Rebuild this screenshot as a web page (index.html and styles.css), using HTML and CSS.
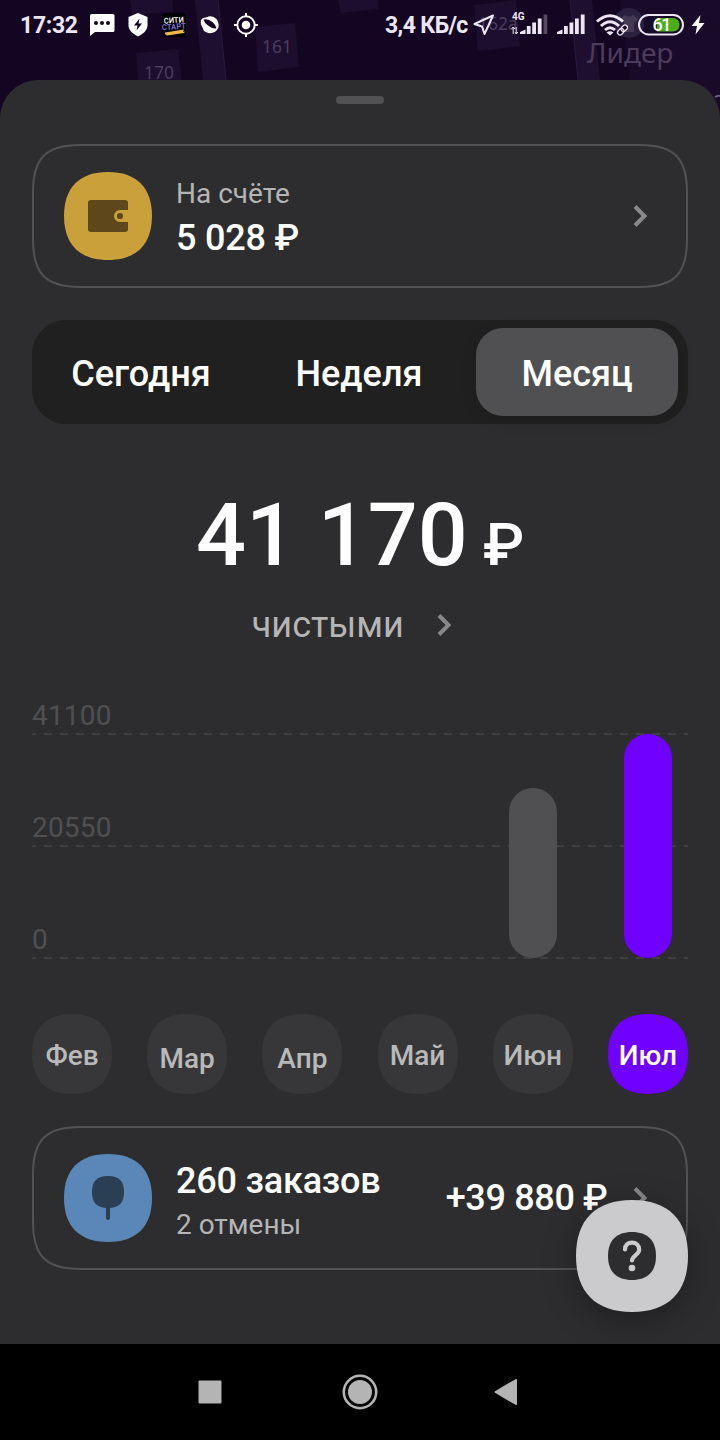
FILE: index.html
```html
<!DOCTYPE html>
<html lang="ru">
<head>
    <meta charset="UTF-8">
    <meta name="viewport" content="width=device-width, initial-scale=1.0">
    <title>Доход</title>
    <link rel="stylesheet" href="styles.css">
</head>
<body>
    <!-- Shared shapes -->
    <svg class="defs" width="0" height="0">
        <symbol id="squircle" viewBox="0 0 88 88">
            <path d="M0 44C0 15.500 15.500 0 44 0S88 15.500 88 44 72.500 88 44 88 0 72.500 0 44Z" fill="currentColor"/>
        </symbol>
        <symbol id="chevron" viewBox="0 0 16 24">
            <path d="M3 2.500L12.500 12L3 21.500" fill="none" stroke="currentColor" stroke-width="4"/>
        </symbol>
        <symbol id="card-outline" viewBox="0 0 656 144">
            <path d="M1 48C1 14 14 1 48 1H608C642 1 655 14 655 48V96C655 130 642 143 608 143H48C14 143 1 130 1 96Z" fill="none" stroke="currentColor" stroke-width="2"/>
        </symbol>
    </svg>

    <div class="phone">
        <svg class="map" width="720" height="130" viewBox="0 0 720 130">
            <rect width="720" height="130" fill="#140623"/>
            <g fill="#1d0d2f">
                <path d="M130 0H173V12L132 15Z"/>
                <path d="M136 53L178 49L183 90H139Z"/>
                <path d="M255 27L295 23L299 67L258 72Z"/>
                <path d="M195 0H218L227 90H204Z" fill="#1e0f31"/>
                <path d="M338 0H378V9L341 13Z"/>
                <path d="M474 5L516 0L520 46L478 51Z"/>
                <path d="M570 0H592L601 90H579Z" fill="#1e0f31"/>
                <path d="M620 0H720V130H690L680 80H630Z" fill="#190a2a"/>
            </g>
            <g fill="none" stroke="#2a1940" stroke-width="1">
                <path d="M218 0L227 90M570 0L579 90"/>
            </g>
            <circle cx="629" cy="23" r="15" fill="#29213f"/>
            <path d="M620 19L625 15Q629 18 633 15L638 19L635 23L634 22V32H624V22L622 23Z" fill="#443a54"/>
            <path d="M715 97Q718 95 720 96" fill="none" stroke="#6d607c" stroke-width="2"/>
            <g class="map-labels">
                <text x="262" y="53">161</text>
                <text x="144" y="79">170</text>
                <text x="478" y="30">162а</text>
                <text class="map-place" x="587" y="63">Лидер</text>
            </g>
        </svg>

        <header class="status-bar">
            <div class="status-left">
                <span class="clock">17:32</span>
                <svg class="ic-chat" width="25" height="23" viewBox="0 0 25 23">
                    <path d="M2 1H23Q24.500 1 24.500 2.500V17.500Q24.500 19 23 19H5L0 23V3Q0 1 2 1Z" fill="#fff"/>
                    <g fill="#140623"><circle cx="6" cy="10" r="2"/><circle cx="12" cy="10" r="2"/><circle cx="18" cy="10" r="2"/></g>
                </svg>
                <svg class="ic-shield" width="20" height="24" viewBox="0 0 20 24">
                    <path d="M10 0L19.500 4V13Q19 19 10 23.500Q1 19 .5 13V4Z" fill="#fff"/>
                    <path d="M11.500 5.500L6 12.500H9.500L8.500 17.500L14 10.500H10.500Z" fill="#140623"/>
                </svg>
                <svg class="ic-app" width="24" height="24" viewBox="0 0 24 24">
                    <rect width="24" height="24" rx="4" fill="#000"/>
                    <text x="2" y="10" fill="#fff" textLength="20" lengthAdjust="spacingAndGlyphs" transform="rotate(-4 12 10)">СИТИ</text>
                    <text x="0" y="16.500" fill="#8d7be0" textLength="24" lengthAdjust="spacingAndGlyphs" transform="rotate(-4 12 16)">СТАРТ</text>
                    <path d="M3 19.500L22 16.500L21 19L23 18.500L22 20L5 22.500L3 21Z" fill="#f0b64a"/>
                </svg>
                <svg class="ic-ball" width="20" height="20" viewBox="0 0 20 20">
                    <path d="M6 2.500Q12 -.5 16.500 4Q20 9 18 13.500Q14.500 19 8.500 18Q3.500 17 2.500 12.500Q0 9 1 5Q2.500 2 6 2.500Z" fill="#fff"/>
                    <path d="M3.500 4.500Q8 3.500 12.500 7Q16 10 16.500 13.500Q12 14 8 10.500Q4 7.500 3.500 4.500Z" fill="#140623"/>
                </svg>
                <svg class="ic-gps" width="24" height="24" viewBox="0 0 24 24">
                    <circle cx="12" cy="12" r="8.700" fill="none" stroke="#fff" stroke-width="1.900"/>
                    <circle cx="12" cy="12" r="4.300" fill="#fff"/>
                    <path d="M12 0V4M12 20V24M0 12H4M20 12H24" stroke="#fff" stroke-width="2"/>
                </svg>
            </div>
            <div class="status-right">
                <span class="net-speed">3,4 КБ/с</span>
                <svg class="ic-nav" width="22" height="22" viewBox="0 0 22 22">
                    <path d="M20 1.500L1.500 10L9 12.500L11.500 20Z" fill="none" stroke="#ece6f2" stroke-width="2" stroke-linejoin="round"/>
                </svg>
                <svg class="ic-lte" width="38" height="28" viewBox="0 -2 38 28">
                    <text x="1" y="7" fill="#ece6f2">4G</text>
                    <path d="M2.200 21V14M.5 16L2.200 14L4 16M5.200 14V20.500M4 19L5.200 21L7 19" fill="none" stroke="#ece6f2" stroke-width="1"/>
                    <g fill="#ece6f2">
                        <path d="M9 21V19L14.500 16.500V21Z"/>
                        <rect x="15.800" y="13" width="3.800" height="8"/>
                        <rect x="21.200" y="9.500" width="3.800" height="11.500"/>
                        <rect x="26.800" y="5.500" width="3.800" height="15.500"/>
                        <rect x="32.500" y="1.500" width="3.800" height="19.500" opacity=".3"/>
                    </g>
                </svg>
                <svg class="ic-signal" width="28" height="24" viewBox="0 0 28 24">
                    <g fill="#ece6f2">
                        <path d="M0 21V19L5.500 16.500V21Z"/>
                        <rect x="7" y="13" width="3.800" height="8"/>
                        <rect x="12.500" y="9.500" width="3.800" height="11.500"/>
                        <rect x="18" y="5.500" width="3.800" height="15.500"/>
                        <rect x="23.800" y="1.500" width="3.800" height="19.500"/>
                    </g>
                </svg>
                <svg class="ic-wifi" width="32" height="24" viewBox="0 0 32 24">
                    <g fill="none" stroke="#ece6f2" stroke-width="3">
                        <path d="M1 8.500Q14 -3 27 8.500"/>
                        <path d="M5 13Q14 4.500 23 13"/>
                        <path d="M9 17Q14 12.500 19 17"/>
                    </g>
                    <path d="M10.500 19.500Q14 17 17.500 19.500L14 22.500Z" fill="#ece6f2"/>
                    <g transform="rotate(-45 26.500 17)" fill="none">
                        <path d="M21 17H32" stroke="#140623" stroke-width="6"/>
                        <rect x="20.500" y="14.500" width="7" height="5" rx="2.500" stroke="#ece6f2" stroke-width="1.300"/>
                        <rect x="25.500" y="14.500" width="7" height="5" rx="2.500" stroke="#ece6f2" stroke-width="1.300"/>
                    </g>
                </svg>
                <svg class="ic-battery" width="46" height="22" viewBox="0 0 46 22">
                    <rect x="1" y="1" width="44" height="19.500" rx="9.700" fill="none" stroke="#ece6f2" stroke-width="2"/>
                    <path d="M19 4H34.500Q41.500 4.500 41.500 10.750T34.500 17.500H19Z" fill="#4caf1a"/>
                    <text x="14.500" y="17" fill="#fff">61</text>
                </svg>
                <svg class="ic-bolt" width="14" height="20" viewBox="0 0 14 20">
                    <path d="M9.500 0L.5 11H6L4.500 19.500L13.500 8H8Z" fill="#fff"/>
                </svg>
            </div>
        </header>

        <main class="sheet">
            <div class="handle"></div>

            <section class="card">
                <svg class="card-outline"><use href="#card-outline"/></svg>
                <div class="card-icon balance-icon">
                    <svg width="88" height="88" viewBox="0 0 88 88">
                        <use href="#squircle"/>
                        <path d="M27 28H61Q64 28 64 31V38H56A6 6 0 0 0 56 50H64V57Q64 60 61 60H27Q24 60 24 57V31Q24 28 27 28Z" fill="#5c481a"/>
                        <circle cx="56" cy="44" r="3.100" fill="#5c481a"/>
                    </svg>
                </div>
                <div class="card-text">
                    <div class="card-sub">На счёте</div>
                    <div class="card-title">5 028 ₽</div>
                </div>
                <svg class="chevron"><use href="#chevron"/></svg>
            </section>

            <nav class="tabs">
                <button class="tab">Сегодня</button>
                <button class="tab">Неделя</button>
                <button class="tab active">Месяц</button>
            </nav>

            <section class="total">
                <div class="total-sum">
                    <span>41 170</span>
                    <span class="total-currency">₽</span>
                </div>
                <div class="total-note">
                    <span>чистыми</span>
                    <svg class="chevron"><use href="#chevron"/></svg>
                </div>
            </section>

            <section class="chart">
                <div class="grid-row">41100</div>
                <div class="grid-row">20550</div>
                <div class="grid-row">0</div>
                <div class="bars">
                    <div class="bar" style="height: 0"></div>
                    <div class="bar" style="height: 0"></div>
                    <div class="bar" style="height: 0"></div>
                    <div class="bar" style="height: 0"></div>
                    <div class="bar" style="height: 170px"></div>
                    <div class="bar current" style="height: 224px"></div>
                </div>
            </section>

            <div class="months">
                <div class="month"><svg><use href="#squircle"/></svg><span>Фев</span></div>
                <div class="month low"><svg><use href="#squircle"/></svg><span>Мар</span></div>
                <div class="month low"><svg><use href="#squircle"/></svg><span>Апр</span></div>
                <div class="month"><svg><use href="#squircle"/></svg><span>Май</span></div>
                <div class="month"><svg><use href="#squircle"/></svg><span>Июн</span></div>
                <div class="month current"><svg><use href="#squircle"/></svg><span>Июл</span></div>
            </div>

            <section class="card orders">
                <svg class="card-outline"><use href="#card-outline"/></svg>
                <div class="card-icon orders-icon">
                    <svg width="88" height="88" viewBox="0 0 88 88">
                        <use href="#squircle"/>
                        <path d="M28 38C28 27 33 22 44 22S60 27 60 38 55 54 44 54 28 49 28 38Z" fill="#2a3e54"/>
                        <path d="M44 52V64" stroke="#2a3e54" stroke-width="4" stroke-linecap="round"/>
                    </svg>
                </div>
                <div class="card-text">
                    <div class="card-title">260 заказов</div>
                    <div class="card-sub">2 отмены</div>
                </div>
                <div class="card-amount">+39 880 ₽</div>
                <svg class="chevron"><use href="#chevron"/></svg>
            </section>

            <button class="help" aria-label="Помощь">
                <svg width="112" height="112" viewBox="0 0 112 112">
                    <use href="#squircle" width="112" height="112"/>
                    <use class="help-inner" href="#squircle" x="32" y="32" width="48" height="48"/>
                    <path d="M49 49.500C49 45 52 42.700 56 42.700S63.200 45.500 63.200 49.500C63.200 55 56 55.500 56 60.500" fill="none" stroke="#cbcbcd" stroke-width="4.200" stroke-linecap="round"/>
                    <circle cx="56" cy="68" r="3.300" fill="#cbcbcd"/>
                </svg>
            </button>
        </main>

        <footer class="nav-bar">
            <svg width="24" height="24" viewBox="0 0 24 24"><rect x=".5" y=".5" width="23" height="23" rx="1" fill="#b4b4b4"/></svg>
            <svg class="nav-home" width="36" height="36" viewBox="0 0 36 36">
                <circle cx="18" cy="18" r="16.200" fill="none" stroke="#b4b4b4" stroke-width="2.600"/>
                <circle cx="18" cy="18" r="12" fill="#b4b4b4"/>
            </svg>
            <svg width="24" height="28" viewBox="0 0 24 28"><path d="M1.500 14L22 2V26Z" fill="#b4b4b4" stroke="#b4b4b4" stroke-width="2" stroke-linejoin="round"/></svg>
        </footer>
    </div>
</body>
</html>
```
FILE: styles.css
```css
* {
    box-sizing: border-box;
}

body {
    margin: 0;
    background: #000;
    font-family: Roboto, "Noto Sans", sans-serif;
    color: #fff;
}

svg {
    display: block;
    flex: none;
}

button {
    border: none;
    background: none;
    padding: 0;
    font-family: inherit;
    color: inherit;
    cursor: pointer;
}

.defs {
    position: absolute;
}

.phone {
    position: relative;
    width: 720px;
    height: 1440px;
    overflow: hidden;
    display: flex;
    flex-direction: column;
}

/* Dimmed map behind the sheet */
.map {
    position: absolute;
    top: 0;
    left: 0;
}

.map-labels {
    font-family: "Noto Sans", sans-serif;
    font-size: 17.5px;
    fill: #4b3c5c;
}

.map-labels .map-place {
    font-size: 28px;
}

/* Status bar */
.status-bar {
    position: relative;
    height: 80px;
    padding: 0 15px 0 20px;
    display: flex;
    justify-content: space-between;
    align-items: flex-start;
}

.status-left, .status-right {
    display: flex;
    align-items: center;
    height: 49px;
}

.clock, .net-speed {
    padding-top: 1px;
    font-size: 23px;
    font-weight: 700;
    letter-spacing: -0.3px;
    color: #ece6f2;
    white-space: nowrap;
}

.clock {
    width: 70px;
}

.net-speed {
    width: 88px;
    letter-spacing: -0.6px;
}

.ic-shield {
    margin-left: 13px;
}

.ic-app {
    margin-left: 14px;
    font-size: 8px;
    font-weight: 500;
}

.ic-ball {
    margin-left: 14px;
}

.ic-gps {
    margin-left: 14px;
}

.ic-lte {
    margin-left: 16px;
    font-size: 10px;
    font-weight: 700;
}

.ic-signal {
    margin-left: 8px;
}

.ic-wifi {
    margin-left: 11px;
}

.ic-battery {
    margin-left: 10px;
    font-size: 18px;
    font-weight: 500;
    letter-spacing: -1.5px;
}

.ic-bolt {
    margin-left: 7px;
}

/* Sheet */
.sheet {
    position: relative;
    height: 1264px;
    padding: 16px 32px 0;
    background: #2d2d2f;
    border-radius: 38px 38px 0 0;
}

.handle {
    width: 48px;
    height: 8px;
    margin: 0 auto 40px;
    border-radius: 4px;
    background: #525254;
}

.card {
    position: relative;
    height: 144px;
    padding: 0 32px;
    display: flex;
    align-items: center;
}

.card-outline {
    position: absolute;
    top: 0;
    left: 0;
    width: 656px;
    height: 144px;
    color: #525254;
}

.balance-icon {
    color: #c9a03a;
}

.orders-icon {
    color: #5b86b8;
}

.card-text {
    flex: 1;
    margin-left: 24px;
    padding-top: 3px;
}

.orders .card-text {
    padding-top: 6px;
}

.card-sub {
    font-size: 28px;
    line-height: 40px;
    color: #b5b5b6;
}

.card-title, .card-amount {
    font-size: 36px;
    line-height: 48px;
    font-weight: 500;
    letter-spacing: -0.2px;
    white-space: nowrap;
}

.chevron {
    width: 16px;
    height: 24px;
    margin-right: 8.5px;
    color: #88888a;
}

.card-amount {
    margin-right: 24px;
    letter-spacing: -0.35px;
}

.tabs {
    display: grid;
    grid-template-columns: 218px 218px 202px;
    height: 104px;
    margin-top: 32px;
    padding: 8px 0;
    border-radius: 34px;
    background: #202020;
}

.tab {
    padding-top: 4px;
    font-size: 36px;
    font-weight: 500;
}

.tab.active {
    margin-left: 8px;
    width: 202px;
    border-radius: 27px;
    background: #505052;
    box-shadow: 0 4px 16px rgba(0, 0, 0, 0.12);
}

.total {
    height: 264px;
    padding-top: 59px;
    display: flex;
    flex-direction: column;
    align-items: center;
}

.total-sum {
    display: flex;
    align-items: baseline;
    gap: 15px;
    font-size: 88px;
    line-height: 104px;
    font-weight: 500;
    white-space: nowrap;
}

.total-currency {
    font-size: 60px;
    line-height: 70px;
}

.total-note {
    display: flex;
    align-items: center;
    gap: 32px;
    margin: 17px 8px 0 0;
    font-size: 36px;
    line-height: 42px;
    color: #b5b5b6;
}

/* Chart */
.chart {
    position: relative;
    height: 271px;
}

.grid-row {
    height: 112px;
    padding-top: 11px;
    font-size: 28px;
    line-height: 33px;
    letter-spacing: 0.2px;
    color: #505052;
    background: repeating-linear-gradient(90deg, #404042 0 8px, transparent 8px 16px) -4px 45px / 672px 2px no-repeat;
}

.bars {
    position: absolute;
    left: 0;
    right: 0;
    top: 46px;
    height: 224px;
    padding: 0 16px;
    display: flex;
    justify-content: space-between;
    align-items: flex-end;
}

.bar {
    width: 48px;
    border-radius: 24px;
    background: #505052;
}

.bar.current {
    background: #7000ff;
}

.months {
    display: flex;
    justify-content: space-between;
    margin: 55px 0 32px;
}

.month {
    display: grid;
    place-items: center;
    width: 80px;
    height: 80px;
    color: #373739;
}

.month svg, .month span {
    grid-area: 1 / 1;
}

.month svg {
    width: 80px;
    height: 80px;
}

.month span {
    position: relative;
    padding-top: 3px;
    font-size: 28px;
    font-weight: 500;
    color: #b9b9ba;
}

.month.low span {
    padding-top: 8px;
}

.month.current {
    color: #7000ff;
}

.month.current span {
    color: #fff;
}

.help {
    position: absolute;
    right: 32px;
    top: 1120px;
    color: #cbcbcd;
    filter: drop-shadow(0 8px 16px rgba(0, 0, 0, 0.3));
}

.help-inner {
    color: #2d2d2f;
}

/* Android navigation */
.nav-bar {
    height: 96px;
    padding: 0 202px 0 198px;
    display: flex;
    justify-content: space-between;
    align-items: center;
    background: #000;
}

.nav-home {
    margin-left: 3px;
}
```
